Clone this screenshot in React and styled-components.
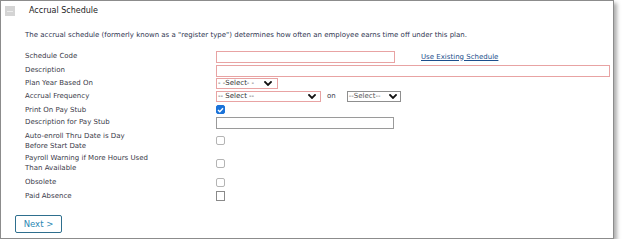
import React from "react";
import styled, { createGlobalStyle } from "styled-components";

const Global = createGlobalStyle`
  html, body { margin: 0; padding: 0; background: #ffffff; }
  body { font-family: "DejaVu Sans", Verdana, sans-serif; }
`;

const Panel = styled.div`
  box-sizing: border-box;
  width: 614px;
  height: 239px;
  border: 1px solid #8c8c8c;
  background: #fff;
  box-shadow: 3px 3px 4px rgba(0, 0, 0, 0.32);
  display: flex;
  flex-direction: column;
`;

const Header = styled.div`
  height: 20px;
  display: flex;
  align-items: center;
  gap: 14px;
  padding-left: 4px;
`;

const Collapse = styled.div`
  width: 10px;
  height: 10px;
  background: #d4d4d4;
  display: flex;
  align-items: center;
  justify-content: center;
  &::after {
    content: "";
    width: 6px;
    height: 1px;
    background: #ececec;
  }
`;

const Title = styled.div`
  font-size: 8px;
  color: #222;
  line-height: 10px;
`;

const Intro = styled.p`
  margin: 9px 0 0 24px;
  font-size: 7px;
  line-height: 10px;
  color: #2f3550;
`;

const Form = styled.div`
  margin: 9px 0 0 24px;
  display: flex;
  flex-direction: column;
`;

const Row = styled.div`
  display: grid;
  grid-template-columns: 191px 1fr;
  align-items: center;
  height: ${(p) => p.$h}px;
`;

const Label = styled.div`
  font-size: 7px;
  line-height: 10px;
  color: #3a3a48;
  transform: translateY(${(p) => p.$dy || 0}px);
`;

const Controls = styled.div`
  display: flex;
  align-items: center;
  gap: ${(p) => p.$gap || 0}px;
`;

const TextInput = styled.div`
  box-sizing: border-box;
  width: ${(p) => p.$w}px;
  height: ${(p) => p.$hgt || 12}px;
  border: 1px solid ${(p) => (p.$required ? "#e8a3a3" : "#9a9a9a")};
  background: #fff;
`;

const LinkText = styled.a`
  font-size: 7px;
  color: #1d4f8c;
  text-decoration: underline;
  margin-left: 26px;
  cursor: pointer;
`;

const SelectBox = styled.div`
  box-sizing: border-box;
  width: ${(p) => p.$w}px;
  height: 11px;
  border: 1px solid ${(p) => (p.$required ? "#e8a3a3" : "#8f8f8f")};
  display: flex;
  align-items: center;
  justify-content: space-between;
  padding: 0 ${(p) => p.$pr || 4}px 0 1px;
  font-size: 7px;
  color: #333;
  background: #fff;
`;

const SelectText = styled.span`
  line-height: 9px;
  color: ${(p) => p.$color || "#333"};
`;

const OnText = styled.span`
  font-size: 7px;
  color: #3a3a48;
  margin-left: 6px;
  margin-right: 11px;
`;

const Check = styled.div`
  box-sizing: border-box;
  width: 9px;
  height: ${(p) => (p.$square ? 10 : 9)}px;
  border-radius: ${(p) => (p.$square ? 0 : 2)}px;
  border: 1px solid ${(p) => (p.$checked ? "#1b73d9" : p.$square ? "#8a8a8a" : "#b4b4b4")};
  background: ${(p) => (p.$checked ? "#1b73d9" : "#fff")};
  display: flex;
  align-items: center;
  justify-content: center;
`;

const NextButton = styled.button`
  box-sizing: border-box;
  margin: 13px 0 0 14px;
  width: 47px;
  height: 18px;
  border: 1px solid #2e6f8e;
  border-radius: 2px;
  background: #fff;
  color: #2b87b3;
  font-family: "DejaVu Sans", Verdana, sans-serif;
  font-size: 8.5px;
  padding: 0;
  display: flex;
  align-items: center;
  justify-content: center;
`;

const Chevron = ({ w = 8 }) => (
  <svg width={w} height="5" viewBox="0 0 8 5">
    <path d="M1 1 L4 4 L7 1" fill="none" stroke="#111" strokeWidth="1.8" strokeLinecap="square" />
  </svg>
);

const Tick = () => (
  <svg width="7" height="6" viewBox="0 0 7 6">
    <path d="M1 3 L2.8 4.8 L6 1.2" fill="none" stroke="#fff" strokeWidth="1.4" />
  </svg>
);

export default function App() {
  return (
    <>
      <Global />
      <Panel>
        <Header>
          <Collapse />
          <Title>Accrual Schedule</Title>
        </Header>
        <Intro>
          The accrual schedule (formerly known as a "register type") determines how often an employee earns time off under this plan.
        </Intro>
        <Form>
          <Row $h={15}>
            <Label $dy={-1.5}>Schedule Code</Label>
            <Controls>
              <TextInput $w={179} $required />
              <LinkText>Use Existing Schedule</LinkText>
            </Controls>
          </Row>
          <Row $h={13}>
            <Label $dy={-1}>Description</Label>
            <Controls>
              <TextInput $w={394} $required />
            </Controls>
          </Row>
          <Row $h={12}>
            <Label>Plan Year Based On</Label>
            <Controls>
              <SelectBox $w={62} $required $pr={5}>
                <SelectText>- -Select- -</SelectText>
                <Chevron />
              </SelectBox>
            </Controls>
          </Row>
          <Row $h={14}>
            <Label>Accrual Frequency</Label>
            <Controls>
              <SelectBox $w={105} $required $pr={4}>
                <SelectText>-- Select --</SelectText>
                <Chevron />
              </SelectBox>
              <OnText>on</OnText>
              <SelectBox $w={54} $pr={3}>
                <SelectText $color="#555">--Select--</SelectText>
                <Chevron />
              </SelectBox>
            </Controls>
          </Row>
          <Row $h={13}>
            <Label>Print On Pay Stub</Label>
            <Controls>
              <Check $checked>
                <Tick />
              </Check>
            </Controls>
          </Row>
          <Row $h={14}>
            <Label $dy={-1}>Description for Pay Stub</Label>
            <Controls>
              <TextInput $w={178} $hgt={12} />
            </Controls>
          </Row>
          <Row $h={21}>
            <Label>
              Auto-enroll Thru Date is Day
              <br />
              Before Start Date
            </Label>
            <Controls>
              <Check />
            </Controls>
          </Row>
          <Row $h={24}>
            <Label>
              Payroll Warning if More Hours Used
              <br />
              Than Available
            </Label>
            <Controls>
              <Check />
            </Controls>
          </Row>
          <Row $h={14}>
            <Label>Obsolete</Label>
            <Controls>
              <Check />
            </Controls>
          </Row>
          <Row $h={13}>
            <Label>Paid Absence</Label>
            <Controls>
              <Check $square />
            </Controls>
          </Row>
        </Form>
        <NextButton>Next &gt;</NextButton>
      </Panel>
    </>
  );
}
